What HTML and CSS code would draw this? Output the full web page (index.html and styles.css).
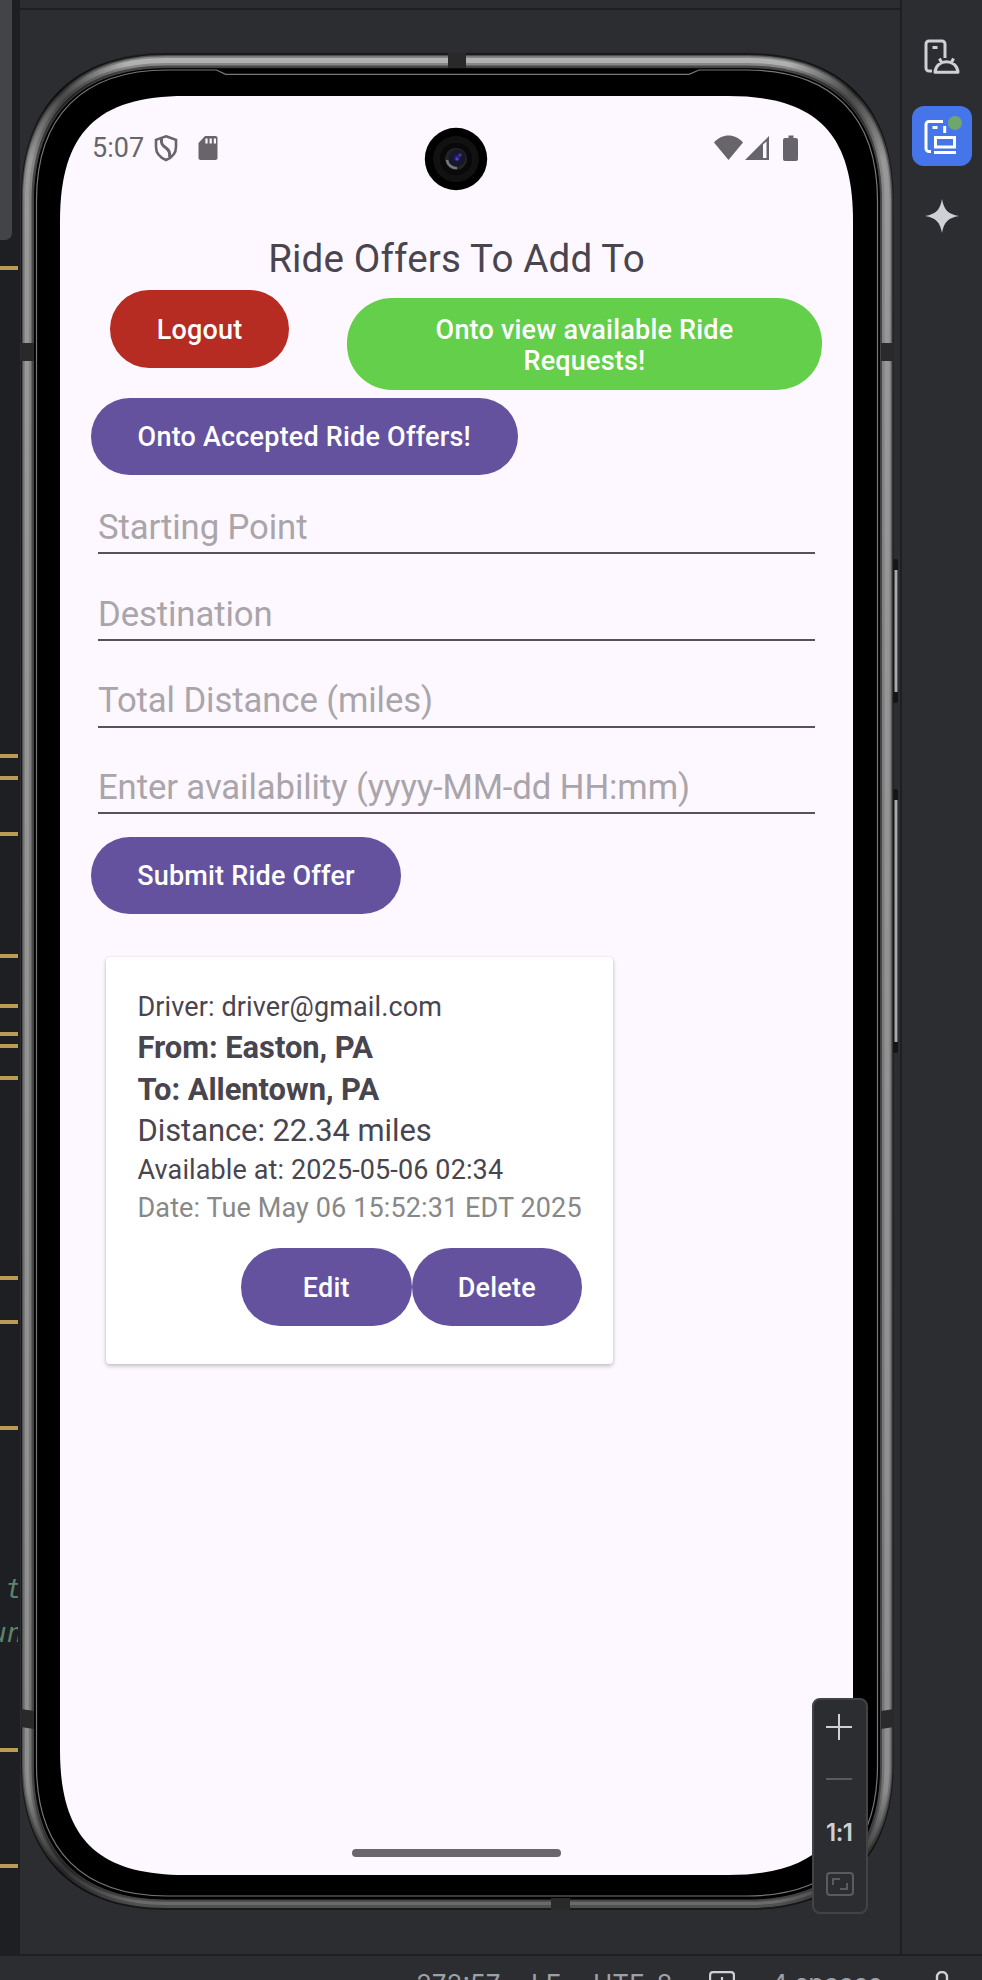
FILE: index.html
```html
<!DOCTYPE html>
<html lang="en">
<head>
<meta charset="utf-8">
<title>Ride Offers</title>
<link rel="stylesheet" href="styles.css">
</head>
<body>
<div class="ide">
  <div class="workspace">
    <aside class="editor">
      <svg class="marks" width="20" height="1956" viewBox="0 0 20 1956">
        <rect x="-12" y="-20" width="24" height="260" rx="7" fill="#434447"/>
        <g fill="#ba9c55">
          <rect y="266" width="18" height="4"/><rect y="754" width="18" height="4"/><rect y="776" width="18" height="4"/>
          <rect y="832" width="18" height="4"/><rect y="954" width="18" height="4"/><rect y="1004" width="18" height="4"/>
          <rect y="1032" width="18" height="4"/><rect y="1044" width="18" height="4"/><rect y="1076" width="18" height="4"/>
          <rect y="1276" width="18" height="4"/><rect y="1320" width="18" height="4"/><rect y="1426" width="18" height="4"/>
          <rect y="1748" width="18" height="4"/><rect y="1864" width="18" height="4"/>
        </g>
      </svg>
      <div class="code"><span class="code-a">t</span><span class="code-b">un</span></div>
    </aside>

    <main class="emulator">
      <svg class="frame" width="880" height="1946" viewBox="20 10 880 1946">
        <defs>
          <linearGradient id="mid" x1="0" y1="0" x2="0" y2="1"><stop offset="0" stop-color="#868686"/><stop offset=".93" stop-color="#747474"/><stop offset="1" stop-color="#505050"/></linearGradient>
          <linearGradient id="hi" x1="0" y1="0" x2="0" y2="1"><stop offset="0" stop-color="#b2b2b2"/><stop offset=".05" stop-color="#989898"/><stop offset=".93" stop-color="#8e8e8e"/><stop offset="1" stop-color="#6a6a6a"/></linearGradient>
          <radialGradient id="shade"><stop offset="0" stop-color="#000" stop-opacity=".6"/><stop offset="1" stop-color="#000" stop-opacity="0"/></radialGradient>
          <clipPath id="body"><path d="M21,198c0,-92 53,-145 145,-145h582.5c92,0 145,53 145,145v1567c0,92 -53,145 -145,145h-582.5c-92,0 -145,-53 -145,-145z"/></clipPath>
        </defs>
        <g>
          <rect x="893" y="559" width="5" height="144" rx="2.5" fill="#151515"/><rect x="894.5" y="570" width="3" height="122" fill="#a8a8a8"/>
          <rect x="893" y="789" width="5" height="264" rx="2.5" fill="#151515"/><rect x="894.5" y="800" width="3" height="242" fill="#a8a8a8"/>
        </g>
        <path fill="#191919" d="M21,198c0,-92 53,-145 145,-145h582.5c92,0 145,53 145,145v1567c0,92 -53,145 -145,145h-582.5c-92,0 -145,-53 -145,-145z"/>
        <path fill="#505050" d="M22,199c0,-92 52,-144 144,-144h582.5c92,0 144,52 144,144v1565c0,92 -52,144 -144,144h-582.5c-92,0 -144,-52 -144,-144z"/>
        <path fill="url(#mid)" d="M23.3,199c0,-90.7 52,-142.7 142.7,-142.7h582.5c90.7,0 142.7,52 142.7,142.7v1565c0,90.7 -52,142.7 -142.7,142.7h-582.5c-90.7,0 -142.7,-52 -142.7,-142.7z"/>
        <path fill="url(#hi)" d="M25,199c0,-90 51,-141 141,-141h582.5c90,0 141,51 141,141v1565c0,90 -51,141 -141,141h-582.5c-90,0 -141,-51 -141,-141z"/>
        <path fill="url(#mid)" d="M29,199c0,-88 49,-136 137,-136h581.5c88,0 137,49 137,136v1566c0,88 -49,137 -137,137h-581.5c-88,0 -137,-49 -137,-137z"/>
        <path fill="#474747" d="M31.500,200c0,-87 48,-134.5 134.5,-134.5h581.5c87,0 134.5,48 134.5,134.5v1567c0,87 -48,134 -134.5,134h-581.5c-87,0 -134.5,-48 -134.5,-134z"/>
        <g clip-path="url(#body)" fill="url(#shade)">
          <circle cx="60" cy="92" r="72"/><circle cx="855" cy="92" r="72"/><circle cx="60" cy="1871" r="85"/><circle cx="855" cy="1871" r="85"/>
        </g>
        <path fill="#000" stroke="#4b4b4b" stroke-width=".8" d="M33.5,201c0,-86 47,-133.3 133,-133.3h581c86,0 133,47 133,133.3v1566c0,86 -47,133 -133,133h-581c-86,0 -133,-47 -133,-133z"/>
        <path fill="none" stroke="#777" stroke-width="1.2" d="M36.5,201c0,-85 46,-131 131,-131h49l9,4.300h463.500l10,-4.300h47.500c85,0 131,46 131,131v1564c0,85 -46,131 -131,131h-579c-85,0 -131,-46 -131,-131z"/>
        <g fill="#292929">
          <rect x="448" y="53" width="18" height="15"/><rect x="21" y="343" width="13" height="18"/><rect x="881" y="343" width="13" height="18"/>
          <path d="M21,1709l13,2v18l-13,-2zM894,1709l-13,2v18l13,-2z"/><rect x="551" y="1898" width="19" height="12"/>
        </g>
        <path fill="#fdf8ff" d="M60,221c0,-88 37,-125 125,-125h543c88,0 125,37 125,125v1529c0,88 -37,125 -125,125h-543c-88,0 -125,-37 -125,-125z"/>
      </svg>

      <section class="screen">
        <header class="sysbar">
          <span class="clock">5:07</span>
          <svg class="shield" width="24" height="28" viewBox="0 0 24 28" fill="none" stroke="#67656a" stroke-width="2.600"><path d="M12,2.300L22,5.800V13c0,6 -4,10.500 -10,13C6,23.500 2,19 2,13V5.800z"/><path d="M7.500,4.500c-.5,5 .5,6.500 4,9s5,5 4,9.500" stroke-width="3"/></svg>
          <svg class="sd" width="20" height="24" viewBox="0 0 20 24"><path fill="#67656a" d="M7,0H17.500a2,2 0 0 1 2,2V22a2,2 0 0 1 -2,2H2.500a2,2 0 0 1 -2,-2V7z"/><path stroke="#fdf8ff" stroke-width="2.200" d="M8.500,2.500v5M12.700,2.500v5M16.900,2.500v5"/></svg>
          <svg class="radio" width="86" height="26" viewBox="0 0 86 26" fill="#67656a"><path d="M14.500,25L0,7.500C8,-1.700 21,-1.700 29,7.500z"/><path fill-rule="evenodd" d="M31,25L55,1V25zM49,9.500V23h3.500V6.500z"/><path d="M74.500,.5h5v2.500h2.500a2,2 0 0 1 2,2V24a2,2 0 0 1 -2,2H71a2,2 0 0 1 -2,-2V5a2,2 0 0 1 2,-2h3.500z"/></svg>
        </header>
        <svg class="camera" width="64" height="64" viewBox="-32 -32 64 64">
          <defs><radialGradient id="lens"><stop offset="0" stop-color="#3c25a0"/><stop offset=".45" stop-color="#181638"/><stop offset="1" stop-color="#101b20"/></radialGradient></defs>
          <circle r="31.200"/><circle r="23" fill="#111"/><circle r="17" fill="#090909" stroke="#161616"/><circle r="11" fill="#242427"/><path d="M-9,1A9,9 0 0 0 1,9" stroke="#77777b" stroke-width="2.500" fill="none"/><circle cx="1" cy="-1" r="8.500" fill="url(#lens)"/><circle cx="4" cy="-4" r="1.800" fill="#5a2b84"/><circle cx="1" cy="0" r="1.500" fill="#4b4bd0"/>
        </svg>

        <h1 class="title">Ride Offers To Add To</h1>
        <div class="actions">
          <button class="btn logout">Logout</button>
          <button class="btn requests">Onto view available Ride<br>Requests!</button>
        </div>
        <button class="btn accepted">Onto Accepted Ride Offers!</button>
        <form class="fields">
          <div class="field">Starting Point</div>
          <div class="field">Destination</div>
          <div class="field">Total Distance (miles)</div>
          <div class="field">Enter availability (yyyy-MM-dd HH:mm)</div>
        </form>
        <button class="btn submit">Submit Ride Offer</button>

        <article class="card">
          <p class="sm">Driver: driver@gmail.com</p>
          <p class="lg strong">From: Easton, PA</p>
          <p class="lg strong">To: Allentown, PA</p>
          <p class="lg">Distance: 22.34 miles</p>
          <p class="sm">Available at: 2025-05-06 02:34</p>
          <p class="sm muted">Date: Tue May 06 15:52:31 EDT 2025</p>
          <div class="card-actions"><button class="btn">Edit</button><button class="btn">Delete</button></div>
        </article>
        <div class="gesture"></div>
      </section>

      <div class="zoom">
        <svg width="28" height="28" viewBox="0 0 28 28" stroke="#ced0d6" stroke-width="2"><path d="M1,14H27M14,1V27"/></svg>
        <svg width="28" height="2" viewBox="0 0 28 2" stroke="#5a5b5c" stroke-width="2"><path d="M1,1H27"/></svg>
        <span class="ratio">1:1</span>
        <svg class="fit" width="28" height="24" viewBox="0 0 28 24" fill="none" stroke="#5a5b5c" stroke-width="2"><rect x="1" y="1" width="26" height="22" rx="3"/><path d="M7,13V7H14M21,11v6H14"/></svg>
      </div>
    </main>

    <nav class="rail">
      <svg class="ic" width="40" height="40" viewBox="0 0 40 40" fill="none" stroke="#ced0d6" stroke-width="3"><path d="M12,35H9a3,3 0 0 1 -3,-3V8a3,3 0 0 1 3,-3H22a3,3 0 0 1 3,3V22"/><path d="M12.500,11.500h5"/><path stroke-linejoin="round" d="M15,36.200c1,-14 22,-14 23,0zM21.500,26.500l-2,-4M31.500,26.500l2,-4"/></svg>
      <div class="active">
        <svg width="40" height="40" viewBox="0 0 40 40" fill="none" stroke="#fff" stroke-width="3"><path d="M11,35.500H9a3,3 0 0 1 -3,-3V8.500a3,3 0 0 1 3,-3H23M24.700,10v7"/><path d="M12.500,11.500h5"/><rect x="15.500" y="21.500" width="19" height="9.500"/><path d="M14,36.500H36"/></svg>
        <span class="dot"></span>
      </div>
      <svg class="spark" width="36" height="36" viewBox="-18 -18 36 36"><path fill="#ced0d6" d="M0,-17C2,-6 6,-2 17,0C6,2 2,6 0,17C-2,6 -6,2 -17,0C-6,-2 -2,-6 0,-17z"/></svg>
    </nav>
  </div>
  <footer class="status">
    <span class="s1">272:57</span><span class="s2">LF</span><span class="s3">UTF-8</span>
    <svg class="s4" width="26" height="26" viewBox="0 0 26 26" fill="none" stroke="#ced0d6" stroke-width="2.200"><rect x="1.100" y="1.100" width="23.800" height="23.800" rx="3"/><path d="M13,6V20M6,13H20"/></svg>
    <span class="s5">4 spaces</span>
    <svg class="s6" width="20" height="28" viewBox="0 0 20 28" fill="none" stroke="#ced0d6" stroke-width="2.400"><path d="M5,13V6a5,5 0 0 1 10,0V13"/><rect x="2" y="13" width="16" height="13" rx="2"/></svg>
  </footer>
</div>
</body>
</html>
```
FILE: styles.css
```css
* { box-sizing: border-box; }
body { margin: 0; background: #2b2d30; font-family: Roboto, sans-serif; }
h1, p { margin: 0; font-weight: 400; }
svg { display: block; flex: none; }

.ide { width: 982px; height: 1980px; overflow: hidden; display: flex; flex-direction: column; }
.workspace { display: flex; height: 1956px; flex: none; }

.editor { position: relative; width: 20px; flex: none; overflow: hidden; background: #1e1f22; }
.marks { position: absolute; inset: 0; }
.code { width: 18px; height: 1956px; padding-top: 1567px; overflow: hidden; display: flex; flex-direction: column; align-items: flex-end; color: #5f826b; font: italic 27px/44px "DejaVu Sans Mono", monospace; }
.code-a { margin-right: -4px; }
.code-b { margin-right: -5px; }

.emulator { position: relative; width: 880px; flex: none; border-top: 2px solid #1e1f22; border-bottom: 2px solid #1e1f22; margin-top: 8px; padding: 86px 47px 0 40px; }
.frame { position: absolute; left: 0; top: 0; }

.screen { position: relative; height: 1779px; color: #49454f; }
.sysbar { height: 104px; padding: 0 53px 0 32px; display: flex; align-items: center; color: #67656a; }
.clock { width: 62px; font-size: 27px; line-height: 32px; }
.sd { margin-left: 20px; }
.radio { margin-left: auto; }
.camera { position: absolute; left: 364px; top: 31px; }

.title { margin-top: 36px; font-size: 38.600px; line-height: 46px; text-align: center; letter-spacing: .15px; }
.actions { display: flex; align-items: flex-start; margin-top: 8.300px; padding-left: 50px; gap: 58px; height: 100px; }
.btn { display: block; height: 77.500px; padding: 3px 0 0; border: 0; border-radius: 39px; background: #64529f; color: #fff; font: 500 27px/31.500px Roboto, sans-serif; letter-spacing: .2px; }
.logout { width: 179px; background: #b62b22; }
.requests { width: 475px; height: 92px; margin-top: 8px; padding-top: 4px; border-radius: 45px; background: #63cf4a; }
.accepted { width: 426.500px; margin: 7.300px 0 0 31px; }
.fields { margin: 27px 38px 0; display: flex; flex-direction: column; gap: 34.200px; }
.field { height: 52.400px; border-bottom: 2px solid #56525b; font-size: 34.700px; line-height: 50.400px; letter-spacing: -.1px; color: #a9a5aa; }
.submit { width: 310px; margin: 22.600px 0 0 31px; }

.card { width: 507px; height: 407px; margin: 42.400px 0 0 46px; padding: 32.600px 31px 0 31.500px; border-radius: 4px; background: #fff; box-shadow: 0 2px 4px rgba(0,0,0,.24), 0 0 2px rgba(0,0,0,.08); white-space: nowrap; }
.sm { font-size: 27px; line-height: 37.500px; letter-spacing: .12px; }
.lg { font-size: 30.900px; line-height: 41.800px; letter-spacing: -.04px; }
.strong { font-weight: 700; }
.muted { color: #888; }
.card-actions { display: flex; justify-content: flex-end; margin-top: 21px; }
.card-actions .btn { width: 170.500px; }
.gesture { width: 209px; height: 8px; margin: 485px auto 0; border-radius: 4px; background: #68666b; }

.zoom { position: absolute; left: 792px; top: 1688px; width: 56px; height: 216px; border: 2px solid #414345; border-radius: 8px; background: #2b2d30; display: flex; flex-direction: column; align-items: flex-start; padding: 13px 0 0 11px; }
.zoom svg + svg { margin-top: 37px; }
.ratio { margin: 38px 0 0 1px; color: #ced0d6; font: 600 24px/30px Inter, sans-serif; letter-spacing: -.5px; }
.zoom .fit { margin: 24px 0 0 1px; }

.rail { width: 82px; border-left: 2px solid #1e1f22; border-bottom: 2px solid #1e1f22; padding: 36px 0 0 10px; }
.ic { margin-left: 8px; }
.active { position: relative; width: 60px; height: 60px; margin-top: 30px; padding: 10px 0 0 8px; border-radius: 12px; background: #4675ea; }
.dot { position: absolute; left: 36px; top: 10px; width: 14px; height: 14px; border-radius: 50%; background: #6fa66b; }
.spark { margin: 32px 0 0 12px; }

.status { height: 24px; padding: 12px 0 0 416px; display: flex; align-items: flex-start; color: #9da0a8; font: 26px/32px Inter, sans-serif; white-space: nowrap; }
.status span, .status svg { flex: none; }
.s1 { width: 115px; }
.s2 { width: 62px; }
.s3 { width: 116px; }
.s4 { margin-top: 3px; }
.s5 { width: 164px; margin-left: 36px; letter-spacing: -.2px; }
.s6 { margin: 3px 0 0 -3px; }
```
